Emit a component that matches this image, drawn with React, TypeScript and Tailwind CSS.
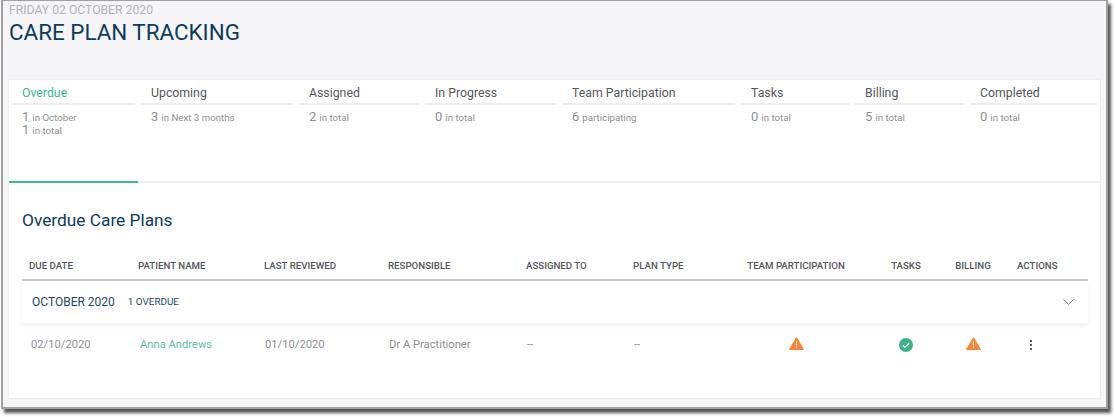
import React from 'react';

const tabs = [
  { title: 'Overdue', width: 'w-[129px]', lines: [['1', 'in October'], ['1', 'in total']], active: true },
  { title: 'Upcoming', width: 'w-[158px]', lines: [['3', 'in Next 3 months']] },
  { title: 'Assigned', width: 'w-[126px]', lines: [['2', 'in total']] },
  { title: 'In Progress', width: 'w-[137px]', lines: [['0', 'in total']] },
  { title: 'Team Participation', width: 'w-[179px]', lines: [['6', 'participating']] },
  { title: 'Tasks', width: 'w-[114px]', lines: [['0', 'in total']] },
  { title: 'Billing', width: 'w-[115px]', lines: [['5', 'in total']] },
  { title: 'Completed', width: 'w-[133px]', lines: [['0', 'in total']] },
];

const gridCols = 'grid grid-cols-[109px_126px_124px_138px_107px_111px_138px_62px_72px_79px]';

const headers = ['DUE DATE', 'PATIENT NAME', 'LAST REVIEWED', 'RESPONSIBLE', 'ASSIGNED TO', 'PLAN TYPE'];

const WarningIcon = () => (
  <svg width="15" height="13" viewBox="0 0 15 13" className="-mt-[3px]">
    <path d="M7.5 0.6 L14.5 12.4 L0.5 12.4 Z" fill="#fa8231" stroke="#fa8231" strokeLinejoin="round" />
    <rect x="6.8" y="4.2" width="1.4" height="4.4" fill="#ffe3cf" />
    <rect x="6.8" y="9.5" width="1.4" height="1.6" fill="#ffe3cf" />
  </svg>
);

const CheckIcon = () => (
  <svg width="14" height="14" viewBox="0 0 14 14">
    <circle cx="7" cy="7" r="7" fill="#39b585" />
    <path d="M3.9 7.3 L6 9.2 L10.1 5.2" fill="none" stroke="#ffffff" strokeWidth="1.3" />
  </svg>
);

export default function App() {
  return (
    <div className="h-[417px] w-[1115px] overflow-hidden bg-white font-['Roboto',sans-serif]">
      <div className="ml-[1px] flex h-[409px] w-[1107px] flex-col border-2 border-t-[1px] border-[#a0a0a0] bg-[#f5f5f8] pr-[5px] pl-[5px] shadow-[3px_4px_3px_#555]">
        <div className="h-[78px] shrink-0 pt-[2px] pl-[1px]">
          <div className="text-[12.2px] leading-[15px] text-[#b3b3b8]">FRIDAY 02 OCTOBER 2020</div>
          <h1 className="text-[22.4px] leading-[28px] text-[#0e3a5e]">CARE PLAN TRACKING</h1>
        </div>

        <div className="h-[320px] w-[1093px] border border-[#eeeef1] bg-white">
          <div className="flex h-[103px] border-b-2 border-[#eeeef0]">
            {tabs.map((tab) => (
              <div key={tab.title} className={`${tab.width} relative shrink-0 px-[3px] pt-[5px]`}>
                <div className={`border-b-2 border-[#eeeef0] pb-[1px] pl-[10px] text-[12.3px] leading-[17px] ${tab.active ? 'text-[#3cb98a]' : 'text-[#55555c]'}`}>
                  {tab.title}
                </div>
                <div className="mt-[5px] pl-[10px]">
                  {tab.lines.map(([num, label]) => (
                    <div key={label} className="h-[13px] text-[9.7px] leading-[13px] text-[#8f8f95]">
                      <span className="mr-[3px] text-[13px]">{num}</span>
                      {label}
                    </div>
                  ))}
                </div>
                {tab.active && <div className="absolute right-0 -bottom-[2px] left-0 h-[2px] bg-[#3cb98a]" />}
              </div>
            ))}
          </div>

          <div className="pr-[12px] pl-[13px]">
            <h2 className="mt-[25px] text-[17.3px] leading-[24px] text-[#0e3a5e]">Overdue Care Plans</h2>

            <div className={`${gridCols} mt-[27px] border-b-2 border-[#c9c9cd] pb-[6px] text-[9.7px] leading-[14px] font-medium text-[#55555c]`}>
              {headers.map((h) => (
                <div key={h} className="pl-[7px] whitespace-nowrap">{h}</div>
              ))}
              <div className="pr-[20px] text-center whitespace-nowrap">TEAM PARTICIPATION</div>
              <div className="text-center">TASKS</div>
              <div className="text-center">BILLING</div>
              <div className="pl-[8px]">ACTIONS</div>
            </div>

            <div className="flex h-[42px] items-center justify-between pr-[14px] pl-[10px] shadow-[0_3px_6px_rgba(0,0,0,0.06)]">
              <div className="flex items-center">
                <span className="text-[12px] text-[#1d4767]">OCTOBER 2020</span>
                <span className="ml-[13px] text-[9.9px] text-[#1d4767]">1 OVERDUE</span>
              </div>
              <svg width="11" height="6" viewBox="0 0 11 6">
                <path d="M0.5 0.5 L5.5 5.2 L10.5 0.5" fill="none" stroke="#6d7480" strokeWidth="0.9" />
              </svg>
            </div>

            <div className={`${gridCols} h-[44px] items-center text-[11.2px] text-[#8f8f95]`}>
              <div className="pl-[9px]">02/10/2020</div>
              <div className="pl-[9px] text-[#5cc29b]">Anna Andrews</div>
              <div className="pl-[8px]">01/10/2020</div>
              <div className="pl-[8px]">Dr A Practitioner</div>
              <div className="pl-[8px]">--</div>
              <div className="pl-[8px]">--</div>
              <div className="flex justify-center pr-[20px]"><WarningIcon /></div>
              <div className="flex justify-center"><CheckIcon /></div>
              <div className="flex justify-center"><WarningIcon /></div>
              <div className="flex flex-col gap-[2px] pl-[21px]">
                <span className="h-[2px] w-[2px] rounded-full bg-[#222]" />
                <span className="h-[2px] w-[2px] rounded-full bg-[#222]" />
                <span className="h-[2px] w-[2px] rounded-full bg-[#222]" />
              </div>
            </div>
          </div>
        </div>
      </div>
    </div>
  );
}
